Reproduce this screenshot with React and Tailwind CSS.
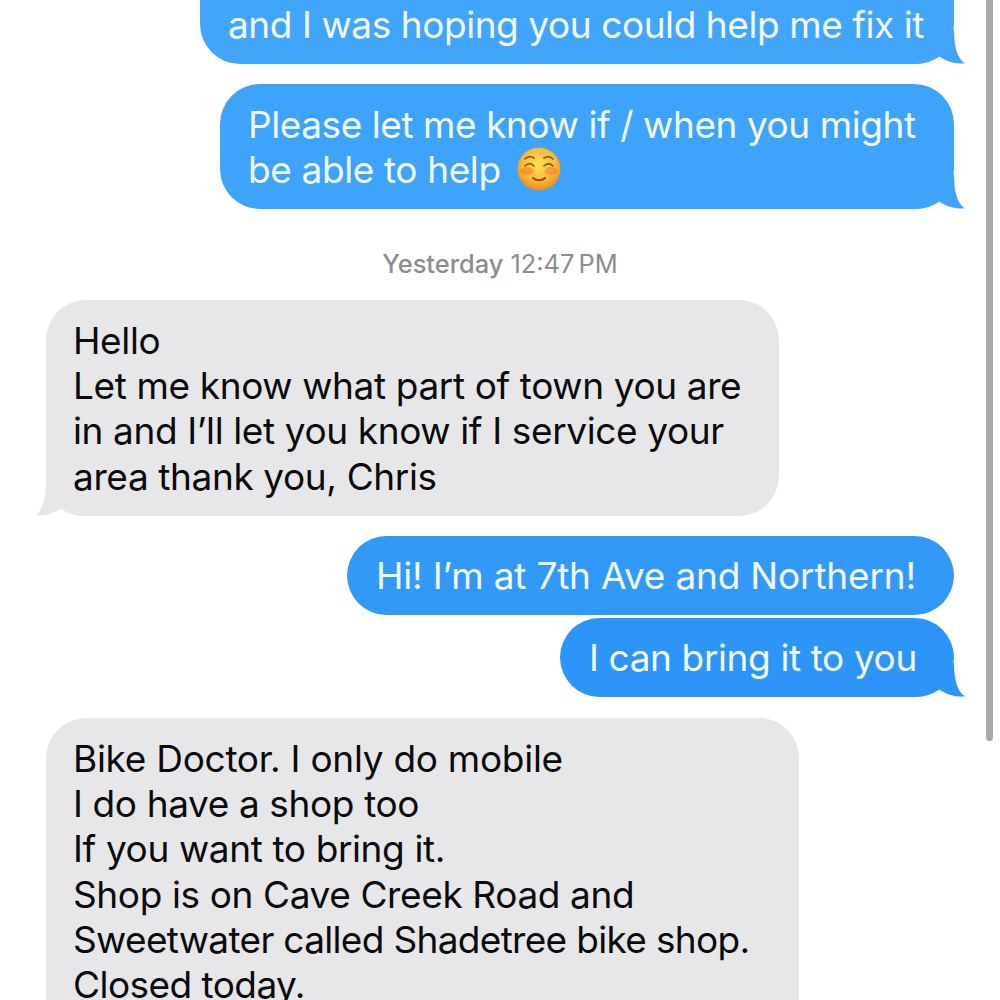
function Tail({ side, color }) {
  // mirrored for incoming bubbles
  return (
    <svg
      className={`absolute bottom-0 ${side === 'right' ? 'right-[-11px]' : 'left-[-11px] -scale-x-100'}`}
      width="50" height="34" viewBox="0 0 50 34"
    >
      <path d="M0 0 H39 C39 16 42 28 50 33.5 C42 34 32 32 24.5 26.5 C18 31 10 34 0 34 Z" fill={color} />
    </svg>
  );
}

function Smile() {
  return (
    <svg className="inline-block align-[-8px] ml-[6px]" width="44" height="44" viewBox="0 0 44 44">
      <defs>
        <radialGradient id="face" cx="50%" cy="40%" r="60%">
          <stop offset="0%" stopColor="#ffdc55" />
          <stop offset="60%" stopColor="#fdbd3a" />
          <stop offset="100%" stopColor="#e98a1e" />
        </radialGradient>
      </defs>
      <circle cx="22" cy="22" r="21.5" fill="url(#face)" />
      <ellipse cx="10" cy="24" rx="6.5" ry="4" fill="#f9703a" opacity="0.5" />
      <ellipse cx="34" cy="24" rx="6.5" ry="4" fill="#f9703a" opacity="0.5" />
      <g fill="none" stroke="#8a5a1c" strokeWidth="1.7" strokeLinecap="round">
        <path d="M8 12 C11 9 14 9 17 11" />
        <path d="M27 11 C30 9 33 9 36 12" />
        <path d="M8 19 C11 16 14 16 17 19" />
        <path d="M27 19 C30 16 33 16 36 19" />
        <path d="M16 31 C19 34 25 34 28 31" strokeWidth="2.2" />
      </g>
    </svg>
  );
}

function Sent({ color, tail, className, children }) {
  return (
    <div className={`relative self-end rounded-[40px] pr-[30px] whitespace-nowrap ${className}`} style={{ backgroundColor: color }}>
      <div className="relative z-10 text-[#f2f9ff]">{children}</div>
      {tail && <Tail side="right" color={color} />}
    </div>
  );
}

function Received({ className, children }) {
  return (
    <div className={`relative self-start bg-[#e7e7ea] rounded-[40px] pl-[27px] pr-[30px] text-[#0b0b0d] whitespace-nowrap ${className}`}>
      <div className="relative z-10">{children}</div>
      <Tail side="left" color="#e7e7ea" />
    </div>
  );
}

export default function App() {
  return (
    <div className="relative w-[1000px] h-[1000px] overflow-hidden bg-white font-['Inter','Liberation_Sans',sans-serif] text-[37px] leading-[45.2px] tracking-[-0.38px]">
      <div className="flex flex-col pl-[46px] pr-[46px] mt-[-40px]">
        <Sent color="#41a5fb" tail className="w-[754px] h-[104px] pl-[28px] pt-[42px] tracking-[-0.43px]">
          and I was hoping you could help me fix it
        </Sent>

        <Sent color="#3ea3fb" tail className="w-[734px] h-[125px] mt-[20px] pl-[28px] pt-[18px]">
          <div className="tracking-[-0.43px]">Please let me know if / when you might</div>
          <div>be able to help <Smile /></div>
        </Sent>

        <div className="mt-[41px] h-[28px] text-center text-[25.4px] leading-[28px] tracking-normal text-[#8c8c91]">
          <span className="font-medium">Yesterday</span> 12:47<span className="ml-[-3px]"> PM</span>
        </div>

        <Received className="w-[733px] h-[216px] mt-[22px] pt-[18px]">
          <div>Hello</div>
          <div>Let me know what part of town you are</div>
          <div>in and I’ll let you know if I service your</div>
          <div>area thank you, Chris</div>
        </Received>

        <Sent color="#3299f9" className="w-[607px] h-[79px] mt-[20px] pl-[29px] pt-[17px] tracking-[-0.18px]">
          Hi! I’m at 7th Ave and Northern!
        </Sent>

        <Sent color="#2d94f8" tail className="w-[394px] h-[79px] mt-[3px] pl-[29px] pt-[17px]">
          I can bring it to you
        </Sent>

        <Received className="w-[753px] h-[320px] mt-[21px] pt-[18px]">
          <div className="tracking-[-0.28px]">Bike Doctor. I only do mobile</div>
          <div>I do have a shop too</div>
          <div>If you want to bring it.</div>
          <div>Shop is on Cave Creek Road and</div>
          <div className="tracking-[-0.68px]">Sweetwater called Shadetree bike shop.</div>
          <div className="tracking-[-0.55px]">Closed today.</div>
        </Received>
      </div>

      {/* scroll indicator */}
      <div className="absolute right-[7px] top-[-10px] w-[7px] h-[751px] rounded-full bg-[#a9a9ab]" />
    </div>
  );
}
